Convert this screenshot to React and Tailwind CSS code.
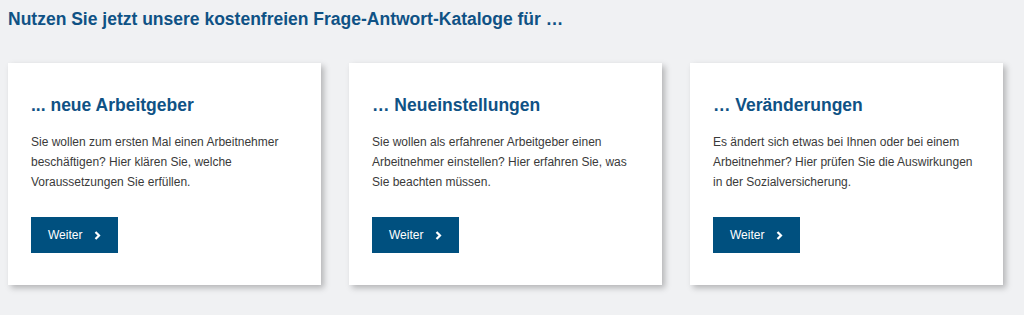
import React from "react";

const cards = [
  {
    title: "... neue Arbeitgeber",
    text: ["Sie wollen zum ersten Mal einen Arbeitnehmer", "beschäftigen? Hier klären Sie, welche", "Voraussetzungen Sie erfüllen."],
  },
  {
    title: "… Neueinstellungen",
    text: ["Sie wollen als erfahrener Arbeitgeber einen", "Arbeitnehmer einstellen? Hier erfahren Sie, was", "Sie beachten müssen."],
  },
  {
    title: "… Veränderungen",
    text: ["Es ändert sich etwas bei Ihnen oder bei einem", "Arbeitnehmer? Hier prüfen Sie die Auswirkungen", "in der Sozialversicherung."],
  },
];

function Chevron() {
  return (
    <svg width="7" height="9" viewBox="0 0 7 9" className="ml-[12px] shrink-0">
      <path d="M1.5 1 L5 4.5 L1.5 8" fill="none" stroke="white" strokeWidth="2.2" />
    </svg>
  );
}

export default function App() {
  return (
    <div
      className="w-[1024px] h-[315px] bg-[#f0f1f3] overflow-hidden"
      style={{ fontFamily: '"Liberation Sans", Arial, sans-serif' }}
    >
      <h1 className="pl-[8px] pt-[9px] text-[17.5px] leading-[20px] font-bold text-[#0f5285]">
        Nutzen Sie jetzt unsere kostenfreien Frage-Antwort-Kataloge für …
      </h1>
      <div className="flex gap-[28px] pl-[8px] pt-[34px]">
        {cards.map((c, i) => (
          <div
            key={i}
            className="w-[313px] h-[222px] bg-white shadow-[3px_3px_6px_rgba(0,0,0,0.25)] pl-[23px] pt-[31px]"
          >
            <h2 className="text-[17.5px] leading-[22px] font-bold text-[#0f5285]">{c.title}</h2>
            <p className="mt-[16px] text-[12px] leading-[20px] text-[#3a3a3a]">
              {c.text.map((t, j) => (
                <span key={j} className="block">{t}</span>
              ))}
            </p>
            <button className="mt-[25px] w-[87px] h-[36px] bg-[#00507f] text-white text-[12px] flex items-center pl-[17px]">
              <span>Weiter</span>
              <Chevron />
            </button>
          </div>
        ))}
      </div>
    </div>
  );
}
